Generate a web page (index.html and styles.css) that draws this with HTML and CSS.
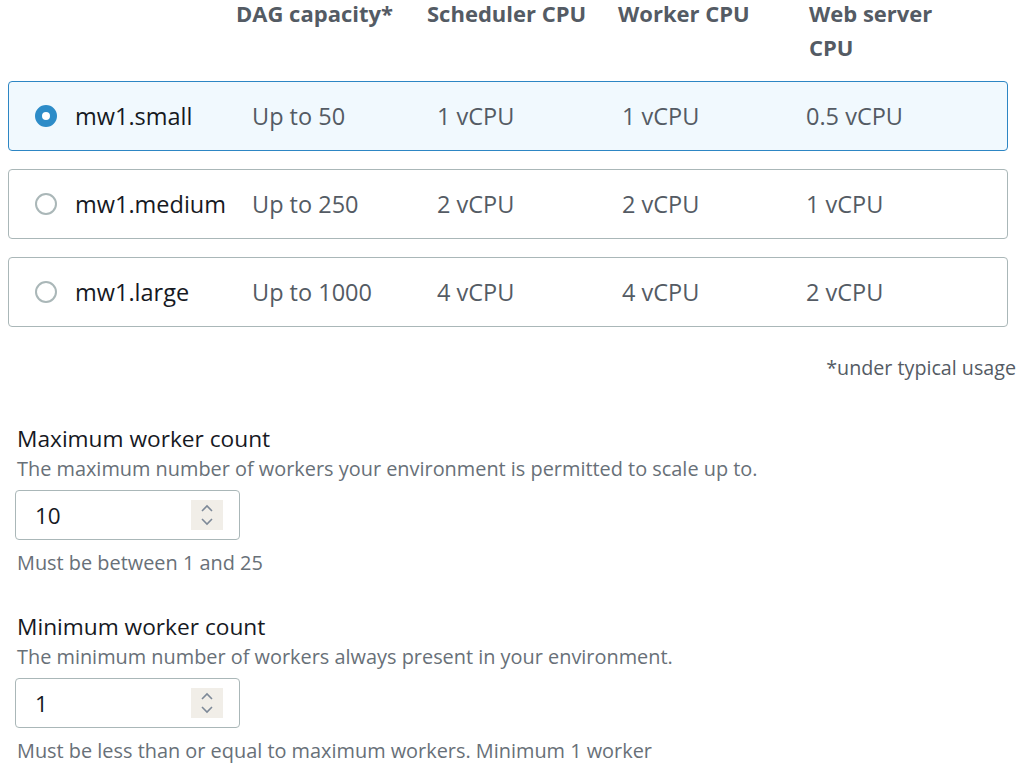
FILE: index.html
```html
<!DOCTYPE html>
<html lang="en">
<head>
<meta charset="utf-8">
<title>Environment class</title>
<link rel="stylesheet" href="styles.css">
</head>
<body>
<div class="page">
  <div class="classes">
    <div class="head">
      <div></div>
      <div class="hcell">DAG capacity*</div>
      <div class="hcell">Scheduler CPU</div>
      <div class="hcell">Worker CPU</div>
      <div class="hcell narrow">Web server CPU</div>
    </div>
    <div class="options">
      <label class="opt selected">
        <span class="radio on"></span>
        <span class="name">mw1.small</span>
        <span class="val">Up to 50</span>
        <span class="val">1 vCPU</span>
        <span class="val">1 vCPU</span>
        <span class="val">0.5 vCPU</span>
      </label>
      <label class="opt">
        <span class="radio"></span>
        <span class="name">mw1.medium</span>
        <span class="val">Up to 250</span>
        <span class="val">2 vCPU</span>
        <span class="val">2 vCPU</span>
        <span class="val">1 vCPU</span>
      </label>
      <label class="opt">
        <span class="radio"></span>
        <span class="name">mw1.large</span>
        <span class="val">Up to 1000</span>
        <span class="val">4 vCPU</span>
        <span class="val">4 vCPU</span>
        <span class="val">2 vCPU</span>
      </label>
    </div>
    <div class="foot">*under typical usage</div>
  </div>

  <div class="field first">
    <div class="label">Maximum worker count</div>
    <div class="desc">The maximum number of workers your environment is permitted to scale up to.</div>
    <div class="input">
      <span class="value">10</span>
      <span class="spin"><svg width="16" height="26" viewBox="0 0 16 26"><path d="M3 9 L8 4 L13 9" fill="none" stroke="#7d8998" stroke-width="1.6"/><path d="M3 17 L8 22 L13 17" fill="none" stroke="#7d8998" stroke-width="1.6"/></svg></span>
    </div>
    <div class="help">Must be between 1 and 25</div>
  </div>

  <div class="field">
    <div class="label">Minimum worker count</div>
    <div class="desc">The minimum number of workers always present in your environment.</div>
    <div class="input">
      <span class="value">1</span>
      <span class="spin"><svg width="16" height="26" viewBox="0 0 16 26"><path d="M3 9 L8 4 L13 9" fill="none" stroke="#7d8998" stroke-width="1.6"/><path d="M3 17 L8 22 L13 17" fill="none" stroke="#7d8998" stroke-width="1.6"/></svg></span>
    </div>
    <div class="help">Must be less than or equal to maximum workers. Minimum 1 worker</div>
  </div>
</div>
</body>
</html>
```

FILE: styles.css
```css
html, body {
  margin: 0;
  padding: 0;
  background: #ffffff;
}
body {
  font-family: "Open Sans", "Noto Sans", sans-serif;
  color: #16191f;
  overflow: hidden;
}
.page {
  width: 1029px;
}
.classes {
  padding: 0 13px 0 8px;
}
.head {
  display: grid;
  grid-template-columns: 228px 191px 191px 191px 160px;
  margin-top: -4px;
  font-size: 22px;
  font-weight: 700;
  line-height: 34px;
  color: #545b64;
}
.hcell.narrow {
  width: 150px;
}
.options {
  margin-top: 17px;
  margin-right: 8px;
  display: flex;
  flex-direction: column;
  gap: 18px;
}
.opt {
  display: grid;
  grid-template-columns: 40px 177px 185px 185px 184px 1fr;
  align-items: center;
  height: 70px;
  box-sizing: border-box;
  padding-left: 26px;
  border: 1px solid #aab7b8;
  border-radius: 4px;
  font-size: 23.5px;
  color: #545b64;
}
.opt.selected {
  background: #f1f9fe;
  border-color: #2d86c4;
}
.radio {
  width: 22px;
  height: 22px;
  box-sizing: border-box;
  border: 2px solid #aab7b8;
  border-radius: 50%;
  background: #fff;
}
.radio.on {
  border: 7px solid #2d8cc8;
}
.name {
  color: #16191f;
}
.foot {
  margin-top: 28px;
  text-align: right;
  font-size: 19.7px;
  line-height: 26px;
  color: #545b64;
}
.field {
  padding-left: 15px;
}
.field.first {
  margin-top: 43px;
}
.field + .field {
  margin-top: 36px;
}
.label {
  padding-left: 2px;
  font-size: 22.7px;
  line-height: 30px;
  color: #16191f;
}
.desc {
  margin-top: 2px;
  padding-left: 2px;
  font-size: 19.9px;
  line-height: 26px;
  color: #687078;
}
.input {
  margin-top: 8px;
  width: 225px;
  height: 50px;
  box-sizing: border-box;
  border: 1px solid #aab7b8;
  border-radius: 4px;
  display: flex;
  align-items: center;
  justify-content: space-between;
  padding: 0 16px 0 19px;
  font-size: 22.5px;
  color: #16191f;
}
.spin {
  width: 32px;
  height: 30px;
  display: flex;
  align-items: center;
  justify-content: center;
  background: #f1eee8;
}
.help {
  margin-top: 10px;
  padding-left: 2px;
  font-size: 19.9px;
  line-height: 26px;
  color: #687078;
}
```
